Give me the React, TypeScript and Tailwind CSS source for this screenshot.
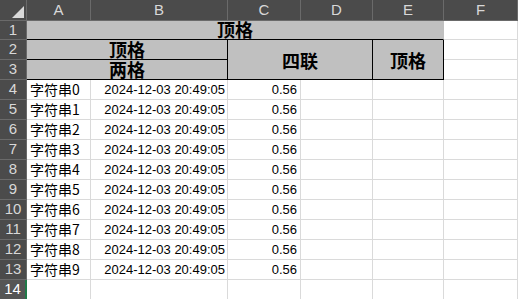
import React from "react"

const cols = ["A", "B", "C", "D", "E", "F"]
const rows = Array.from({ length: 10 }, (_, i) => ({
  name: "字符串" + i,
  time: "2024-12-03 20:49:05",
  value: "0.56",
}))

const grid = "border-r border-b border-[#dadada]"

function RowHead({ n, active }: { n: number; active?: boolean }) {
  return (
    <div
      className={`flex items-center justify-center border-b border-r border-[#6a6a6a] bg-[#4b4b4b] text-[15px] text-[#d8d8d8] ${
        active ? "border-r-2 border-r-[#1f7a48] bg-[#555555] text-white" : ""
      }`}
    >
      {n}
    </div>
  )
}

function Heading({ children, className = "" }: { children: React.ReactNode; className?: string }) {
  return (
    <div
      className={`flex justify-center bg-[#c0c0c0] text-[18px] font-bold leading-[18px] text-black ${className}`}
      style={{ fontFamily: '"Noto Sans CJK SC", serif' }}
    >
      {children}
    </div>
  )
}

export default function App() {
  return (
    <div
      className="h-[299px] w-[518px] overflow-hidden bg-white"
      style={{ fontFamily: '"Liberation Sans", "Noto Sans CJK SC", sans-serif' }}
    >
      <div className="grid grid-cols-[27px_64px_137px_73px_72px_71px_74px] grid-rows-[21px_19px_20px_20px_repeat(11,20px)]">
        {/* column headers */}
        <div className="relative border-b border-r border-[#6a6a6a] bg-[#4b4b4b]">
          <svg className="absolute bottom-[2px] right-[2px]" width="12" height="12" viewBox="0 0 12 12">
            <polygon points="12,0 12,12 0,12" fill="#d9d9d9" />
          </svg>
        </div>
        {cols.map((c) => (
          <div
            key={c}
            className="flex items-center justify-center border-b border-r border-[#6a6a6a] bg-[#4b4b4b] text-[15px] text-[#d8d8d8]"
          >
            {c}
          </div>
        ))}

        {/* row 1 */}
        <RowHead n={1} />
        <Heading className="col-span-5 items-end border-b border-b-black border-r border-r-[#c0c0c0] pb-[1px]">顶格</Heading>
        <div className={grid} />

        {/* rows 2-3 */}
        <RowHead n={2} />
        <Heading className="col-span-2 items-end border-b border-r border-black pb-[1px]">顶格</Heading>
        <Heading className="col-span-2 row-span-2 items-center border-b border-r border-black">四联</Heading>
        <Heading className="row-span-2 items-center border-b border-r border-black">顶格</Heading>
        <div className={grid} />

        <RowHead n={3} />
        <Heading className="col-span-2 items-end border-b border-r border-black pb-[1px]">两格</Heading>
        <div className={grid} />

        {/* data */}
        {rows.map((r, i) => (
          <React.Fragment key={r.name}>
            <RowHead n={i + 4} />
            <div
              className={`${grid} flex items-end pb-[1px] pl-[3px] text-[14px] leading-[17px] text-black`}
              style={{ fontFamily: '"Noto Sans CJK SC", sans-serif' }}
            >
              {r.name}
            </div>
            <div className={`${grid} flex items-end justify-end pb-[1px] pr-[2px] text-[13px] leading-[17px] text-black`}>
              {r.time}
            </div>
            <div className={`${grid} flex items-end justify-end pb-[1px] pr-[3px] text-[13px] leading-[17px] text-black`}>
              {r.value}
            </div>
            <div className={grid} />
            <div className={grid} />
            <div className={grid} />
          </React.Fragment>
        ))}

        <RowHead n={14} active />
        {cols.map((c) => (
          <div key={c} className={grid} />
        ))}
      </div>
    </div>
  )
}
